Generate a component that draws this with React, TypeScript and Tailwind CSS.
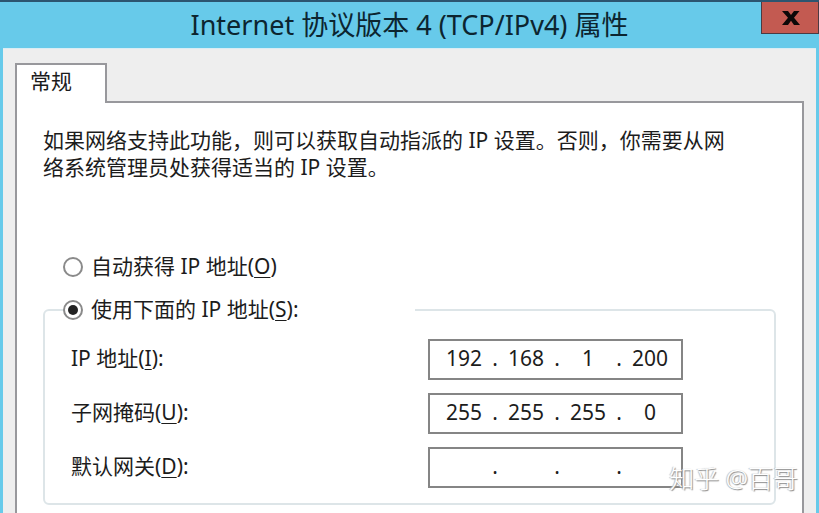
import { useState } from "react";
import type { ReactNode } from "react";

type Row = {
  id: string;
  name: string;
  accessKey: string;
  octets: string[];
};

const rows: Row[] = [
  { id: "ip", name: "IP 地址", accessKey: "I", octets: ["192", "168", "1", "200"] },
  { id: "mask", name: "子网掩码", accessKey: "U", octets: ["255", "255", "255", "0"] },
  { id: "gateway", name: "默认网关", accessKey: "D", octets: ["", "", "", ""] },
];

function AccessKey({ children }: { children: ReactNode }) {
  return <span className="underline decoration-1 underline-offset-3">{children}</span>;
}

function Radio({ id, checked, onChange }: { id: string; checked: boolean; onChange: () => void }) {
  return (
    <span className="grid size-5 shrink-0 place-items-center">
      <input
        id={id}
        type="radio"
        name="mode"
        checked={checked}
        onChange={onChange}
        className="peer col-start-1 row-start-1 size-5 appearance-none rounded-full border-2 border-[#8a8a8a] bg-white"
      />
      <span className="pointer-events-none col-start-1 row-start-1 hidden size-[10px] rounded-full bg-[#222222] peer-checked:block" />
    </span>
  );
}

function AddressField({ row }: { row: Row }) {
  return (
    <div className="flex h-[41px] items-start">
      <label htmlFor={`${row.id}-0`} className="w-[357px] shrink-0 leading-[38px]">
        {row.name}(<AccessKey>{row.accessKey}</AccessKey>):
      </label>
      <div className="flex h-full w-[255px] shrink-0 items-start justify-center border-2 border-[#858585] bg-white pl-[3px]">
        {row.octets.map((octet, i) => (
          <div key={i} className="flex">
            {i > 0 && <span className="w-3 text-center leading-[34px]">.</span>}
            <input
              id={`${row.id}-${i}`}
              aria-label={i > 0 ? `${row.name} ${i + 1}` : undefined}
              defaultValue={octet}
              maxLength={3}
              className="h-[34px] w-[50px] bg-transparent text-center outline-none"
            />
          </div>
        ))}
      </div>
    </div>
  );
}

export default function App() {
  const [mode, setMode] = useState("manual");

  return (
    <div className="flex min-h-screen flex-col border-t-2 border-[#2c5570] bg-[#67caea] font-['Noto_Sans','Noto_Sans_CJK_SC',sans-serif] text-[21px] text-[#1c1c1c]">
      <header className="relative flex h-[46px] items-center justify-center">
        <h1 className="text-[27px] leading-[46px] text-[#0c2530]">Internet 协议版本 4 (TCP/IPv4) 属性</h1>
        <button
          type="button"
          aria-label="关闭"
          className="absolute top-0 right-0 flex h-8 w-[58px] items-center justify-center border border-t-0 border-[#4c3a42] bg-[#c35a51] pl-[2px]"
        >
          <svg viewBox="0 0 18 14" className="h-[14px] w-[18px]" fill="#0d0808">
            <path d="M0 0h6l3 4 3-4h5.500l-5.500 6.800L18 14h-6L9 9.700 6 14H0l6-7.200z" />
          </svg>
        </button>
      </header>

      <main className="mx-[3px] flex flex-1 flex-col border-t border-[#d9edf4] bg-[#eeeeee] px-3 pt-[14px]">
        <div role="tablist" className="z-10 -mb-[2px] flex">
          <button
            type="button"
            role="tab"
            aria-selected="true"
            className="h-10 w-[92px] border-2 border-b-0 border-[#98989c] bg-white pr-5 pb-[5px] text-center leading-[33px]"
          >
            常规
          </button>
        </div>

        <section className="relative flex-1 border-2 border-b-0 border-[#98989c] bg-white px-[26px] pt-6">
          <p className="max-w-[700px] leading-[27px]">
            如果网络支持此功能，则可以获取自动指派的 IP 设置。否则，你需要从网络系统管理员处获得适当的 IP 设置。
          </p>

          <div className="mt-[71px] flex h-[30px] items-center gap-2 pl-5">
            <Radio id="auto" checked={mode === "auto"} onChange={() => setMode("auto")} />
            <label htmlFor="auto" className="leading-7 pb-[2px]">
              自动获得 IP 地址(<AccessKey>O</AccessKey>)
            </label>
          </div>

          <fieldset className="mt-[13px] rounded-md border-2 border-[#dde5e8] pb-[15px] pl-[26px]">
            <legend className="-ml-2 flex h-[30px] w-[352px] items-center gap-2">
              <Radio id="manual" checked={mode === "manual"} onChange={() => setMode("manual")} />
              <label htmlFor="manual" className="leading-7 pb-[2px]">
                使用下面的 IP 地址(<AccessKey>S</AccessKey>):
              </label>
            </legend>
            <div className="mt-[14px] flex flex-col gap-[13px]">
              {rows.map((row) => (
                <AddressField key={row.id} row={row} />
              ))}
            </div>
          </fieldset>

          <span className="absolute top-[355px] right-1 text-[25px] leading-10 font-light whitespace-nowrap text-white [text-shadow:1px_1px_1px_#888888,-1px_0_1px_#bbbbbb]">
            知乎 @百哥
          </span>
        </section>
      </main>
    </div>
  );
}
